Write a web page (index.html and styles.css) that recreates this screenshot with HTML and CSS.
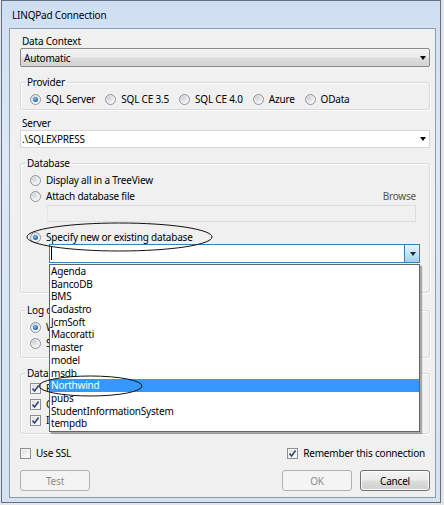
FILE: index.html
```html
<!DOCTYPE html>
<html>
<head>
<meta charset="utf-8">
<title>LINQPad Connection</title>
<link rel="stylesheet" href="styles.css">
</head>
<body>
<div class="window">
  <div class="titlebar">LINQPad Connection</div>
  <div class="client">
    <div class="label">Data Context</div>
    <div class="combo combo-aero"><span class="combo-text">Automatic</span><i class="arrow"></i></div>

    <fieldset class="group group-provider">
      <legend>Provider</legend>
      <div class="inner provider-row">
        <div class="opt"><span class="radio on"></span>SQL Server</div>
        <div class="opt"><span class="radio"></span>SQL CE 3.5</div>
        <div class="opt"><span class="radio"></span>SQL CE 4.0</div>
        <div class="opt"><span class="radio"></span>Azure</div>
        <div class="opt"><span class="radio"></span>OData</div>
      </div>
    </fieldset>

    <div class="label label-server">Server</div>
    <div class="combo combo-edit"><span class="combo-text">.\SQLEXPRESS</span><i class="arrow"></i></div>

    <fieldset class="group group-db">
      <legend>Database</legend>
      <div class="inner db-inner">
        <div class="opt row"><span class="radio"></span>Display all in a TreeView</div>
        <div class="opt row row-gap"><span class="radio"></span>Attach database file<span class="browse">Browse</span></div>
        <div class="filebox"></div>
        <div class="opt row row-specify"><span class="radio on"></span>Specify new or existing database</div>
        <div class="combo combo-open"><span class="caret"></span><span class="dropbtn"><i class="arrow"></i></span></div>
      </div>
    </fieldset>

    <fieldset class="group group-logon">
      <legend>Log on details</legend>
      <div class="inner logon-inner">
        <div class="opt row"><span class="radio on"></span>Windows Authentication (Integrated)</div>
        <div class="opt row row-gap"><span class="radio"></span>SQL Authentication</div>
      </div>
    </fieldset>

    <fieldset class="group group-options">
      <legend>Data Context Options</legend>
      <div class="inner options-inner">
        <div class="opt row"><span class="check on"><svg viewBox="0 0 9 9"><path d="M1.5 4.6 L3.6 7 L7.6 1.6"/></svg></span>Pluralize EntitySet and Table properties</div>
        <div class="opt row row-gap"><span class="check on"><svg viewBox="0 0 9 9"><path d="M1.5 4.6 L3.6 7 L7.6 1.6"/></svg></span>Capitalize property names</div>
        <div class="opt row row-gap"><span class="check on"><svg viewBox="0 0 9 9"><path d="M1.5 4.6 L3.6 7 L7.6 1.6"/></svg></span>Include System Views and SPs</div>
      </div>
    </fieldset>

    <div class="footer-row">
      <div class="opt"><span class="check"></span>Use SSL</div>
      <div class="opt"><span class="check on"><svg viewBox="0 0 9 9"><path d="M1.5 4.6 L3.6 7 L7.6 1.6"/></svg></span>Remember this connection</div>
    </div>

    <div class="buttons">
      <button class="btn disabled">Test</button>
      <span class="spacer"></span>
      <button class="btn disabled">OK</button>
      <button class="btn">Cancel</button>
    </div>

    <ul class="dblist">
      <li>Agenda</li>
      <li>BancoDB</li>
      <li>BMS</li>
      <li>Cadastro</li>
      <li>JcmSoft</li>
      <li>Macoratti</li>
      <li>master</li>
      <li>model</li>
      <li>msdb</li>
      <li class="sel">Northwind</li>
      <li>pubs</li>
      <li>StudentInformationSystem</li>
      <li>tempdb</li>
    </ul>

    <svg class="mark mark-specify" viewBox="0 0 187 30"><ellipse cx="93.5" cy="15" rx="92.5" ry="14"/></svg>
    <svg class="mark mark-north" viewBox="0 0 105 22"><ellipse cx="52.5" cy="11" rx="51.5" ry="10"/></svg>
  </div>
</div>
</body>
</html>
```

FILE: styles.css
```css
* { box-sizing: border-box; }
html, body { margin: 0; padding: 0; }
body {
  width: 444px;
  height: 505px;
  overflow: hidden;
  background: #e3e7ec;
  font-family: "Noto Sans", "Open Sans", sans-serif;
  font-size: 10px;
  letter-spacing: -0.2px;
  line-height: 14px;
  color: #000;
}

.window {
  margin-left: 1px;
  width: 440px;
  border: 1px solid #66707c;
  background: linear-gradient(180deg, #cfdff3 0%, #dce8f7 30%, #d4e2f3 100%);
  padding: 0 4px 4px 7px;
}

.titlebar {
  height: 27px;
  padding: 2px 0 0 3px;
  line-height: 25px;
  color: #000;
}

.client {
  position: relative;
  width: 427px;
  border: 1px solid #8e9cad;
  background: #f0f0f0;
  padding: 5px 5px 6px 10px;
}

.label { height: 14px; padding-left: 2px; }
.label-server { margin-top: 6px; }

/* combos */
.combo {
  position: relative;
  display: flex;
  align-items: center;
}
.combo-aero {
  height: 19px;
  border: 1px solid #8b8b8b;
  border-radius: 2px;
  background: linear-gradient(180deg, #f3f3f3 0%, #ececec 48%, #dedede 52%, #d3d3d3 100%);
  padding-left: 3px;
}
.combo-edit {
  height: 18px;
  border: 1px solid #d3d6dc;
  background: #fff;
  padding-left: 1px;
}
.arrow {
  position: absolute;
  right: 3px;
  top: 50%;
  margin-top: -2px;
  width: 0;
  height: 0;
  border-left: 3.5px solid transparent;
  border-right: 3.5px solid transparent;
  border-top: 4px solid #000;
}

/* group boxes */
.group {
  margin: 8px 0 0 0;
  padding: 0;
  border: 1px solid #d2dbe2;
  border-radius: 3px;
  box-shadow: inset 1px 1px 0 #fff, 1px 1px 0 #fff;
  min-width: 0;
}
.group legend {
  margin-left: 4px;
  padding: 0 2px;
  line-height: 14px;
}
.inner { padding-left: 9px; }

.opt {
  display: flex;
  align-items: center;
  gap: 5px;
  height: 14px;
  white-space: nowrap;
}
.row-gap { margin-top: 2px; }

.provider-row {
  display: flex;
  gap: 10px;
  padding-top: 3px;
  padding-bottom: 3px;
}

.db-inner { padding-top: 3px; padding-right: 13px; padding-bottom: 29px; }
.browse { margin-left: auto; color: #555; }
.filebox {
  margin: 2px 0 0 17px;
  height: 17px;
  border: 1px solid #dddddd;
  border-left-color: #e6e6e6;
}
.row-specify { margin-top: 8px; }
.combo-open {
  margin-left: 19px;
  width: 371px;
  height: 19px;
  border: 1px solid #3c7fb1;
  background: #fff;
}
.caret {
  display: block;
  width: 1px;
  height: 13px;
  margin-left: 1px;
  background: #000;
}
.dropbtn {
  position: absolute;
  right: 0;
  top: 0;
  bottom: 0;
  width: 15px;
  border-left: 1px solid #3c7fb1;
  background: linear-gradient(180deg, #e3f3fc 0%, #c6e5f8 50%, #9fd0f0 100%);
}
.dropbtn .arrow { right: 3px; border-top-color: #1b2a3a; }

.group-logon { margin-top: 10px; }
.logon-inner { padding-top: 3px; padding-bottom: 7px; }

.options-inner { padding-top: 1px; padding-bottom: 6px; }

/* radio & check */
.radio {
  flex: none;
  position: relative;
  width: 11px;
  height: 11px;
  border-radius: 50%;
  border: 1px solid #8f9297;
  background: radial-gradient(circle at 35% 30%, #cfd2d6 0%, #e9eaec 45%, #fbfbfb 80%);
}
.radio.on::after {
  content: "";
  position: absolute;
  left: 2px;
  top: 2px;
  width: 5px;
  height: 5px;
  border-radius: 50%;
  background: radial-gradient(circle at 40% 35%, #7fc0ef 0%, #2f6fb0 60%, #1d4f86 100%);
}
.check {
  flex: none;
  width: 11px;
  height: 11px;
  border: 1px solid #8e8f8f;
  background: linear-gradient(135deg, #d8d9db 0%, #f3f3f3 60%, #ffffff 100%);
  box-shadow: inset 0 0 0 1px #f4f4f4;
  display: flex;
  align-items: center;
  justify-content: center;
}
.check svg { width: 9px; height: 9px; }
.check path { fill: none; stroke: #2f4a78; stroke-width: 1.6; }

.footer-row {
  margin-top: 12px;
  display: flex;
  justify-content: space-between;
  padding-right: 5px;
}

.buttons {
  margin-top: 10px;
  display: flex;
  gap: 8px;
}
.spacer { flex: 1; }
.btn {
  width: 70px;
  height: 21px;
  padding: 0;
  font: inherit;
  letter-spacing: inherit;
  color: #000;
  border: 1px solid #707070;
  border-radius: 3px;
  background: linear-gradient(180deg, #f2f2f2 0%, #ebebeb 48%, #dddddd 52%, #cfcfcf 100%);
  box-shadow: inset 0 0 0 1px #fbfbfb;
}
.btn.disabled {
  color: #8d8d8d;
  border-color: #adb2b5;
  background: #f4f4f4;
  box-shadow: none;
}

/* dropdown list overlay */
.dblist {
  position: absolute;
  left: 39px;
  top: 235px;
  width: 371px;
  margin: 0;
  padding: 0 0 1px 0;
  list-style: none;
  background: #fff;
  border: 1px solid #646464;
  box-shadow: 2px 2px 1px rgba(0, 0, 0, 0.3);
}
.dblist li {
  height: 12.7px;
  line-height: 12.7px;
  padding-left: 1px;
  white-space: nowrap;
}
.dblist li.sel { background: #3399ff; color: #fff; }

/* hand-drawn annotation ellipses */
.mark {
  position: absolute;
  overflow: visible;
}
.mark ellipse { fill: none; stroke: #111; stroke-width: 1; }
.mark-specify { left: 16px; top: 193px; width: 187px; height: 30px; }
.mark-north { left: 28px; top: 346px; width: 105px; height: 22px; }
```
